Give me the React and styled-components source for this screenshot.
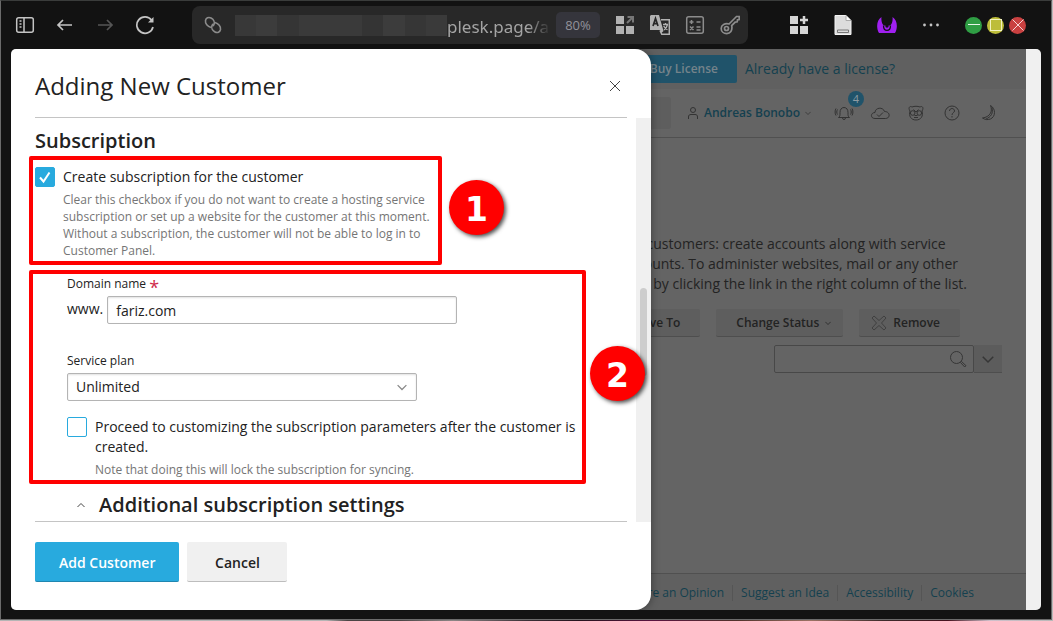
import styled, { createGlobalStyle } from 'styled-components'

const GlobalStyle = createGlobalStyle`
  *, *::before, *::after { box-sizing: border-box; }
  body {
    margin: 0;
    font-family: "Open Sans", sans-serif;
    font-size: 14px;
    line-height: 20px;
    color: #222;
  }
  button, input, select { font: inherit; color: inherit; margin: 0; }
  h1, h2, h3, p { margin: 0; }
  a { text-decoration: none; }
`

/* ---------- browser window ---------- */

const Desktop = styled.div`
  display: flex;
  flex-direction: column;
  min-height: 100vh;
  padding-bottom: 1px;
  background: linear-gradient(90deg, #b5b5b5 0 31%, #4b4444 33% 38%, #8d8686 43%, #3a3036 50%, #26131d 55%, #5a1440 62%, #51322b 70%, #9c7264 77%, #3d2a2a 84%, #45121e 90%, #cfc0cb 94%, #b9b9b9);
`

const BrowserWindow = styled.div`
  flex: 1;
  display: flex;
  flex-direction: column;
  margin-right: 1px;
  padding: 0 10px 9px;
  background: #121212;
  border: 1px solid #6a6a6a;
  border-top-color: #3a3c3b;
`

const BrowserBar = styled.header`
  display: flex;
  align-items: center;
  height: 48px;
  color: #c4c4c4;
`

const NavGroup = styled.nav`
  display: flex;
  gap: 20px;
  margin: 0 37px 0 4px;
`

const BarButton = styled.button`
  display: grid;
  place-items: center;
  width: 20px;
  height: 24px;
  padding: 0;
  border: 0;
  background: none;
  color: ${({ $color }) => $color || 'inherit'};
`

const AddressBar = styled.div`
  flex: 1;
  display: flex;
  align-items: center;
  min-width: 0;
  height: 38px;
  padding: 0 8px 0 11px;
  border-radius: 8px;
  background: #282828;
  color: #8c8c8c;
`

const Redacted = styled.span`
  flex-shrink: 0;
  width: 212px;
  height: 21px;
  margin-left: 12px;
  background: linear-gradient(90deg, #383838 0 10%, #3c3c3c 10% 20%, #353535 20% 30%, #3a3a3a 30% 60%, #343434 60% 70%, #3c3c3c 70% 80%, #363636 80% 90%, #3a3a3a 90%);
`

const Address = styled.span`
  flex: 1;
  font-family: "Noto Sans", sans-serif;
  font-size: 17px;
  line-height: 24px;
  padding-top: 4px;
  white-space: nowrap;
  color: #a4a4a4;
  mask-image: linear-gradient(90deg, #000 78%, transparent);
`

const Zoom = styled.button`
  width: 44px;
  height: 26px;
  margin: 0 15px 0 5px;
  padding: 0;
  border: 0;
  border-radius: 5px;
  background: #35353c;
  color: #92929a;
  font-size: 13px;
`

const AddressTools = styled.div`
  display: flex;
  gap: 15px;
`

const Extensions = styled.div`
  display: flex;
  gap: 24px;
  margin: 0 24px 0 41px;
`

const WindowButtons = styled.div`
  display: flex;
  gap: 5px;
  margin-right: 15px;
`

const WindowButton = styled.button`
  display: grid;
  place-items: center;
  width: 17px;
  height: 17px;
  padding: 0;
  border: 0;
  border-radius: 50%;
  background: ${({ $color }) => $color};
`

const Viewport = styled.div`
  position: relative;
  flex: 1;
  display: flex;
  overflow: hidden;
  border-radius: 5px;
  background: #646464;
`

const PageScrollbar = styled.div`
  width: 15px;
  background: #f0f0f0;
`

/* ---------- dimmed page ---------- */

const Page = styled.div`
  flex: 1;
  min-width: 0;
  display: flex;
  flex-direction: column;
  color: #232323;
`

const PageLink = styled.a`
  color: #14404f;
`

const LicenseBar = styled.div`
  display: flex;
  justify-content: flex-end;
  align-items: center;
  gap: 8px;
  height: 40px;
  padding-right: 131px;
  background: #606060;
`

const BuyButton = styled.button`
  height: 28px;
  padding: 0 19px;
  border: 0;
  border-radius: 2px;
  background: #20536a;
  color: #75838a;
  font-size: 12px;
  font-weight: 600;
`

const PageHeader = styled.div`
  display: flex;
  justify-content: flex-end;
  align-items: center;
  height: 49px;
  padding-right: 28px;
  border-bottom: 1px solid #505050;
`

const HeaderSearch = styled.div`
  width: 120px;
  height: 32px;
  margin-right: 16px;
  border-radius: 3px;
  background: #5e5e5e;
`

const UserMenu = styled.button`
  display: flex;
  align-items: center;
  gap: 5px;
  margin-right: 23px;
  padding: 0;
  border: 0;
  background: none;
  color: #14404f;
  font-size: 12px;
  font-weight: 600;

  svg { color: #333; }
`

const HeaderIcons = styled.div`
  display: flex;
  gap: 16px;
`

const IconButton = styled.button`
  position: relative;
  display: grid;
  place-items: center;
  width: 20px;
  height: 20px;
  padding: 0;
  border: 0;
  background: none;
  color: #333;
`

const Counter = styled.span`
  position: absolute;
  left: 14px;
  top: -12px;
  width: 16px;
  height: 16px;
  border-radius: 50%;
  background: #20536a;
  color: #8d9ba2;
  font-size: 11px;
  line-height: 16px;
`

const Intro = styled.p`
  width: fit-content;
  margin: 96px 59px 15px auto;
  white-space: nowrap;
`

const Actions = styled.div`
  display: flex;
  justify-content: flex-end;
  gap: 16px;
  padding-right: 66px;
`

const ActionButton = styled.button`
  display: flex;
  align-items: center;
  gap: 6px;
  height: 28px;
  padding: 0 ${({ $right }) => $right || 20}px 0 ${({ $left }) => $left || 20}px;
  border: 0;
  border-bottom: 1px solid #4e4e4e;
  border-radius: 2px;
  background: #5e5e5e;
  font-size: 12px;
  font-weight: 600;
`

const SearchRow = styled.div`
  display: flex;
  justify-content: flex-end;
  padding: 8px 24px 0 0;
  color: #363636;
`

const SearchBox = styled.label`
  display: flex;
  align-items: center;
  width: 200px;
  height: 28px;
  padding-right: 6px;
  border: 1px solid #484848;
  border-radius: 2px;
`

const SearchInput = styled.input`
  flex: 1;
  min-width: 0;
  padding: 0 8px;
  border: 0;
  background: none;
`

const SearchMore = styled.button`
  display: grid;
  place-items: center;
  width: 28px;
  height: 28px;
  padding: 0;
  border: 0;
  border-bottom: 1px solid #4e4e4e;
  background: #5c5c5c;
`

const PageFooter = styled.footer`
  display: flex;
  justify-content: flex-end;
  align-items: center;
  height: 37px;
  margin-top: auto;
  padding: 2px 44px 0 0;
  border-top: 1px solid #505050;
  background: #606060;
  font-size: 12px;
`

const FooterLink = styled(PageLink)`
  padding: 0 8px;
  line-height: 16px;
  white-space: nowrap;

  & + & { border-left: 1px solid #555; }
`

/* ---------- drawer ---------- */

const Drawer = styled.section`
  position: absolute;
  inset: 0 auto 0 0;
  display: flex;
  flex-direction: column;
  width: 640px;
  max-width: 100%;
  border-radius: 0 16px 16px 0;
  background: #fff;
  box-shadow: 0 0 10px rgba(0, 0, 0, .4);
`

const DrawerHeader = styled.div`
  display: flex;
  justify-content: space-between;
  align-items: center;
  height: 69px;
  margin: 0 24px;
  padding: 6px 2px 0 0;
  border-bottom: 1px solid #c4c4c4;
`

const Title = styled.h1`
  font-size: 24px;
  font-weight: 400;
  line-height: 32px;
`

const DrawerBody = styled.div`
  flex: 1;
  min-height: 0;
  display: flex;
`

const Form = styled.form`
  flex: 1;
  margin: 0 9px 0 24px;
  border-bottom: 1px solid #c4c4c4;
`

const ScrollTrack = styled.div`
  width: 15px;
  padding: 170px 4px 0;
  background: #f0f0f0;
`

const ScrollThumb = styled.div`
  width: 7px;
  height: 88px;
  border-radius: 4px;
  background: #cdcdcd;
`

const SectionTitle = styled.h2`
  padding: 9px 0 12px;
  font-size: 20px;
  font-weight: 600;
  line-height: 28px;
`

const Group = styled.div`
  position: relative;
  padding-left: ${({ $indent }) => $indent || 0}px;

  & + & { margin-top: 17px; }
`

const Highlight = styled.div`
  position: absolute;
  top: ${({ $top }) => $top}px;
  bottom: -6px;
  left: -6px;
  width: ${({ $width }) => $width}px;
  border: 4px solid #f00;
  border-radius: 2px;
  pointer-events: none;
`

const Step = styled.span`
  position: absolute;
  left: calc(100% + ${({ $gap }) => $gap}px);
  top: ${({ $top }) => $top}px;
  width: 55px;
  height: 55px;
  border-radius: 50%;
  background: #f00;
  box-shadow: 2px 2px 4px rgba(0, 0, 0, .7);
  color: #fff;
  font: bold 33px/60px "DejaVu Sans", sans-serif;
  text-align: center;
`

const CheckRow = styled.div`
  display: grid;
  grid-template-columns: 20px 1fr;
  column-gap: 8px;
  max-width: ${({ $width }) => $width}px;
`

const Checkbox = styled.input`
  appearance: none;
  width: 20px;
  height: 20px;
  margin: 0;
  border: 1px solid #28aade;
  border-radius: 2px;
  background: #fff;

  &:checked {
    background: #28aade url("data:image/svg+xml,%3Csvg xmlns='http://www.w3.org/2000/svg' viewBox='0 0 18 18'%3E%3Cpath d='M4 9.500l3.500 4 6-9' fill='none' stroke='white' stroke-width='2'/%3E%3C/svg%3E");
  }
`

const Hint = styled.p`
  grid-column: 2;
  padding-top: 4px;
  color: #757575;
  font-size: 12px;
  line-height: 17px;
`

const FieldLabel = styled.label`
  display: block;
  padding-bottom: 4px;
  font-size: 12px;
  line-height: 16px;
`

const Required = styled.span`
  color: #d02a4b;
  font-size: 18px;
  line-height: 0;
  vertical-align: -6px;
`

const DomainRow = styled.div`
  display: flex;
  gap: 4px;
  padding-bottom: 29px;
  line-height: 26px;
`

const TextInput = styled.input`
  width: 350px;
  height: 28px;
  padding: 0 8px;
  border: 1px solid #b4b4b4;
  border-radius: 2px;
  background: #fff;
  box-shadow: inset 0 1px 2px rgba(0, 0, 0, .12);
`

const SelectWrap = styled.div`
  display: grid;
  align-items: center;
  width: 350px;
  margin-bottom: 16px;

  > * { grid-area: 1 / 1; }
  > svg { justify-self: end; margin-right: 10px; color: #888; pointer-events: none; }
`

const Select = styled(TextInput)`
  appearance: none;
`

const Toggle = styled.button`
  display: flex;
  align-items: center;
  gap: 14px;
  margin: 13px 0 0 42px;
  padding: 0;
  border: 0;
  background: none;
  font-size: 20px;
  font-weight: 600;
  line-height: 28px;

  svg { color: #444; }
`

const DrawerFooter = styled.div`
  display: flex;
  gap: 8px;
  padding: 20px 24px 28px;
`

const FormButton = styled.button`
  min-width: 100px;
  height: 40px;
  padding: 2px 24px 0;
  border: 0;
  border-bottom: 1px solid ${({ $primary }) => ($primary ? '#1f86b0' : '#bdbdbd')};
  border-radius: 2px;
  background: ${({ $primary }) => ($primary ? '#28aade' : '#f0f0f0')};
  color: ${({ $primary }) => ($primary ? '#fff' : '#222')};
  font-weight: 600;
`

const Icon = ({ size = 20, box = size, width = 1, children }) => (
  <svg width={size} height={size} viewBox={`0 0 ${box} ${box}`} fill='none' stroke='currentColor' strokeWidth={width} aria-hidden='true'>
    {children}
  </svg>
)

const Chevron = ({ size = 8, up = false }) => (
  <Icon size={size} box={8}>
    <path d={up ? 'M.5 6 4 2.500 7.500 6' : 'M.5 2.500 4 6 7.500 2.500'} />
  </Icon>
)

const BrowserToolbar = () => (
  <BrowserBar>
    <NavGroup>
      <BarButton aria-label='Sidebar'>
        <Icon width={1.5}>
          <rect x='1.700' y='2.700' width='16.600' height='14.600' rx='2' />
          <path d='M9 3v14' />
          <path d='M4.500 6h2M4.500 9h2M4.500 12h2' />
        </Icon>
      </BarButton>
      <BarButton aria-label='Back'>
        <Icon width={1.7}><path d='M17 10H3M8 5l-5 5 5 5' /></Icon>
      </BarButton>
      <BarButton aria-label='Forward' $color='#555'>
        <Icon width={1.7}><path d='M3 10h14M12 5l5 5-5 5' /></Icon>
      </BarButton>
      <BarButton aria-label='Reload'>
        <Icon width={1.7}>
          <path d='M16.500 5A8.200 8.200 0 1 0 18 12' />
          <path d='M18.500 2v5.500H13z' fill='currentColor' stroke='none' />
        </Icon>
      </BarButton>
    </NavGroup>

    <AddressBar>
      <Icon width={1.6}>
        <path d='M8 12.500C4.500 11.500 2 8.500 2.500 5.500 3 3 5.500 1.700 8 3c2.500 1.300 4 4 3 6.500-.3.800-.8 1.200-1.500 1.500' />
        <path d='M12 7.500c3.500 1 6 4 5.500 7-.5 2.500-3 3.800-5.500 2.500-2.500-1.300-4-4-3-6.500.3-.8.800-1.200 1.500-1.500' />
      </Icon>
      <Redacted />
      <Address>plesk.page/a</Address>
      <Zoom>80%</Zoom>
      <AddressTools>
        <BarButton aria-label='Tab groups' $color='#b2b2b2'>
          <Icon>
            <path d='M1 1h8v8H1zM1 11h8v8H1zM11 11h8v8h-8z' fill='currentColor' stroke='none' />
            <path d='M12 8l6-6M12.500 2H18v5.500' stroke='#777' strokeWidth='2' />
          </Icon>
        </BarButton>
        <BarButton aria-label='Translate' $color='#b2b2b2'>
          <Icon>
            <path d='M11 4.700h8.300v14.600h-7.500L10 15.500' strokeWidth='1.500' />
            <path d='M1 0h8l4.500 16-2 2L10 15H0V1z' fill='currentColor' stroke='none' />
            <path d='M3 11l2.500-7.500L8 11M4 8.700h3' stroke='#282828' strokeWidth='1.700' />
            <path d='M13 9.500h5M15.500 8v1.500M17.500 9.500c-.5 2.500-1.500 4-3.500 5.500M13.700 11c.8 1.800 2.300 3 3.800 3.700' strokeWidth='1.300' />
          </Icon>
        </BarButton>
        <BarButton aria-label='Calculator'>
          <Icon width={1.5}>
            <rect x='1.700' y='1.700' width='16.600' height='16.600' rx='2' />
            <path d='M4.500 7h4M6.500 5v4M11.500 7h4M5 11.500l3.500 3.500M8.500 11.500L5 15M11.500 12h4M11.500 15h4' />
          </Icon>
        </BarButton>
        <BarButton aria-label='Passwords'>
          <Icon width={1.7}>
            <path d='M9 9l7.500-7.500h2.700v3l-1.700.3-.3 2-2 .3-3.500 3.500c1 5-1.500 8-5 8-3 0-5.500-2-5.500-5.200C1.200 10 5 8 9 9z' />
            <circle cx='6.500' cy='13.500' r='2' />
          </Icon>
        </BarButton>
      </AddressTools>
    </AddressBar>

    <Extensions>
      <BarButton aria-label='Extensions' $color='#d6d6d6'>
        <Icon>
          <path d='M1 1h8v8H1zM1 11h8v8H1zM11 11h8v8h-8z' fill='currentColor' stroke='none' />
          <path d='M15 1v8M11 5h8' strokeWidth='2.500' />
        </Icon>
      </BarButton>
      <BarButton aria-label='Notes'>
        <Icon>
          <path d='M2 .5h11l5 5v14H2z' fill='#dcdcdc' stroke='#f4f4f4' />
          <path d='M13 .5v5h5' fill='#fff' stroke='#aaa' />
          <path d='M4.500 15h11v2.500h-11z' stroke='#777' />
        </Icon>
      </BarButton>
      <BarButton aria-label='Mask' $color='#a020f0'>
        <Icon>
          <path d='M4.500 2C-.5 5-1 13 2 18h16c3-5 2.500-13-2.500-16 .5 4-.5 7-2.500 8.500H7C5 9 4 6 4.500 2z' fill='currentColor' stroke='none' />
          <path d='M6.500 10.500c0 6.500 7 6.500 7 0' stroke='#121212' strokeWidth='1.300' />
          <circle cx='10' cy='11' r='1.700' fill='#121212' stroke='none' />
        </Icon>
      </BarButton>
      <BarButton aria-label='More'>
        <Icon>
          <g fill='currentColor' stroke='none'>
            <circle cx='3.500' cy='10' r='1.400' />
            <circle cx='10' cy='10' r='1.400' />
            <circle cx='16.500' cy='10' r='1.400' />
          </g>
        </Icon>
      </BarButton>
    </Extensions>

    <WindowButtons>
      <WindowButton aria-label='Minimize' $color='#2f9e44'>
        <Icon size={16}><path d='M2 7.500h12' stroke='#e7f5e9' /></Icon>
      </WindowButton>
      <WindowButton aria-label='Maximize' $color='#bdbd3a'>
        <Icon size={16}><rect x='2.500' y='2.500' width='11' height='11' stroke='#f2f2c0' /></Icon>
      </WindowButton>
      <WindowButton aria-label='Close window' $color='#c94040'>
        <Icon size={16}><path d='M2.500 2.500l11 11M13.500 2.500l-11 11' stroke='#f5d5d5' /></Icon>
      </WindowButton>
    </WindowButtons>
  </BrowserBar>
)

const CustomersPage = () => (
  <Page>
    <LicenseBar>
      <BuyButton>Buy License</BuyButton>
      <PageLink href='#license'>Already have a license?</PageLink>
    </LicenseBar>

    <PageHeader>
      <HeaderSearch />
      <UserMenu>
        <Icon size={12}>
          <circle cx='6' cy='3' r='2.500' />
          <path d='M1.500 12V10c0-2 1-2.500 2.500-2.500h4c1.500 0 2.500.5 2.500 2.500v2' />
        </Icon>
        Andreas Bonobo
        <Chevron size={6} />
      </UserMenu>
      <HeaderIcons>
        <IconButton aria-label='Notifications'>
          <Icon>
            <path d='M4.500 14.500c1.500-1 1.500-2 1.500-5 0-3 1.500-5 4-5s4 2 4 5c0 3 0 4 1.500 5zM8.500 15c0 2 3 2 3 0M3.500 6.500c-1 1.500-1 3.500 0 5M16.500 6.500c1 1.500 1 3.500 0 5M2 5.500c-1.200 2-1.200 5 0 7M18 5.500c1.200 2 1.200 5 0 7' />
          </Icon>
          <Counter>4</Counter>
        </IconButton>
        <IconButton aria-label='Cloud'>
          <Icon>
            <path d='M5 15.500c-5 0-4.500-6 0-6 0-5 8-6 9.500-1 6 0 6 7 1 7zM7 11.500l2 2 4-4' />
          </Icon>
        </IconButton>
        <IconButton aria-label='Panda'>
          <Icon>
            <path d='M4 8C2 5 3.500 2.500 6 4c2.500-1 5.500-1 8 0 2.500-1.500 4 1 2 4 1.500 5-1 9-6 9s-7.500-4-6-9zM8 14.500h4' />
            <circle cx='6.700' cy='10' r='2.300' />
            <circle cx='13.300' cy='10' r='2.300' />
            <path d='M7.500 6.500L10 9l2.500-2.500M8.500 12.500h3' />
          </Icon>
        </IconButton>
        <IconButton aria-label='Help'>
          <Icon>
            <circle cx='10' cy='10' r='7' />
            <path d='M7.500 8c0-3.300 5-3.300 5 0 0 1.700-2.500 1.700-2.500 4M10 13v1.500' />
          </Icon>
        </IconButton>
        <IconButton aria-label='Dark mode'>
          <Icon>
            <path d='M12.500 2.500c2.500 6-.5 11.500-8 12.500 5 3.500 12 1 12-5.500 0-3-1.500-5.500-4-7zM14 4.500c1.500 5.500-1 9.500-6 11.500' />
          </Icon>
        </IconButton>
      </HeaderIcons>
    </PageHeader>

    <Intro>
      manage your customers: create accounts along with service<br />
      customer accounts. To administer websites, mail or any other<br />
      Account Panel by clicking the link in the right column of the list.
    </Intro>

    <Actions>
      <ActionButton>Move To</ActionButton>
      <ActionButton $right={12}>Change Status <Chevron size={6} /></ActionButton>
      <ActionButton $left={12}>
        <Icon size={16}>
          <path d='M3 1l5 4.500L13 1l2 2-4.500 5 4.500 5-2 2-5-4.500L3 15l-2-2 4.500-5L1 3z' stroke='#404040' />
        </Icon>
        Remove
      </ActionButton>
    </Actions>
    <SearchRow>
      <SearchBox>
        <SearchInput type='text' aria-label='Search customers' />
        <Icon size={18}>
          <circle cx='7.500' cy='7.500' r='6' />
          <path d='M11.500 12.500l1-1 4.500 4.200-1.300 1.300z' />
        </Icon>
      </SearchBox>
      <SearchMore aria-label='Search options'><Chevron size={12} /></SearchMore>
    </SearchRow>

    <PageFooter>
      <FooterLink href='#opinion'>Share an Opinion</FooterLink>
      <FooterLink href='#idea'>Suggest an Idea</FooterLink>
      <FooterLink href='#accessibility'>Accessibility</FooterLink>
      <FooterLink href='#cookies'>Cookies</FooterLink>
    </PageFooter>
  </Page>
)

const CustomerDrawer = () => (
  <Drawer aria-labelledby='drawer-title'>
    <DrawerHeader>
      <Title id='drawer-title'>Adding New Customer</Title>
      <BarButton aria-label='Close' $color='#444'>
        <Icon size={12}><path d='M1 1l10 10M11 1L1 11' /></Icon>
      </BarButton>
    </DrawerHeader>

    <DrawerBody>
      <Form id='customer-form'>
        <SectionTitle>Subscription</SectionTitle>
        <Group>
          <CheckRow $width={400}>
            <Checkbox type='checkbox' id='create' defaultChecked />
            <label htmlFor='create'>Create subscription for the customer</label>
            <Hint>
              Clear this checkbox if you do not want to create a hosting service subscription or set up a website for the customer at this moment. Without a subscription, the customer will not be able to log in to Customer Panel.
            </Hint>
          </CheckRow>
          <Highlight $top={-11} $width={413}>
            <Step $top={20} $gap={11}>1</Step>
          </Highlight>
        </Group>

        <Group $indent={32}>
          <FieldLabel htmlFor='domain'>Domain name <Required>*</Required></FieldLabel>
          <DomainRow>
            <span>www.</span>
            <TextInput type='text' id='domain' defaultValue='fariz.com' />
          </DomainRow>
          <FieldLabel htmlFor='plan'>Service plan</FieldLabel>
          <SelectWrap>
            <Select as='select' id='plan'>
              <option>Unlimited</option>
            </Select>
            <Chevron size={10} />
          </SelectWrap>
          <CheckRow $width={516}>
            <Checkbox type='checkbox' id='customize' />
            <label htmlFor='customize'>Proceed to customizing the subscription parameters after the customer is created.</label>
            <Hint>Note that doing this will lock the subscription for syncing.</Hint>
          </CheckRow>
          <Highlight $top={-6} $width={557}>
            <Step $top={72} $gap={8}>2</Step>
          </Highlight>
        </Group>

        <Toggle type='button'><Chevron up />Additional subscription settings</Toggle>
      </Form>
      <ScrollTrack><ScrollThumb /></ScrollTrack>
    </DrawerBody>

    <DrawerFooter>
      <FormButton $primary type='submit' form='customer-form'>Add Customer</FormButton>
      <FormButton type='button'>Cancel</FormButton>
    </DrawerFooter>
  </Drawer>
)

const App = () => (
  <>
    <GlobalStyle />
    <Desktop>
      <BrowserWindow>
        <BrowserToolbar />
        <Viewport>
          <CustomersPage />
          <PageScrollbar />
          <CustomerDrawer />
        </Viewport>
      </BrowserWindow>
    </Desktop>
  </>
)

export default App
